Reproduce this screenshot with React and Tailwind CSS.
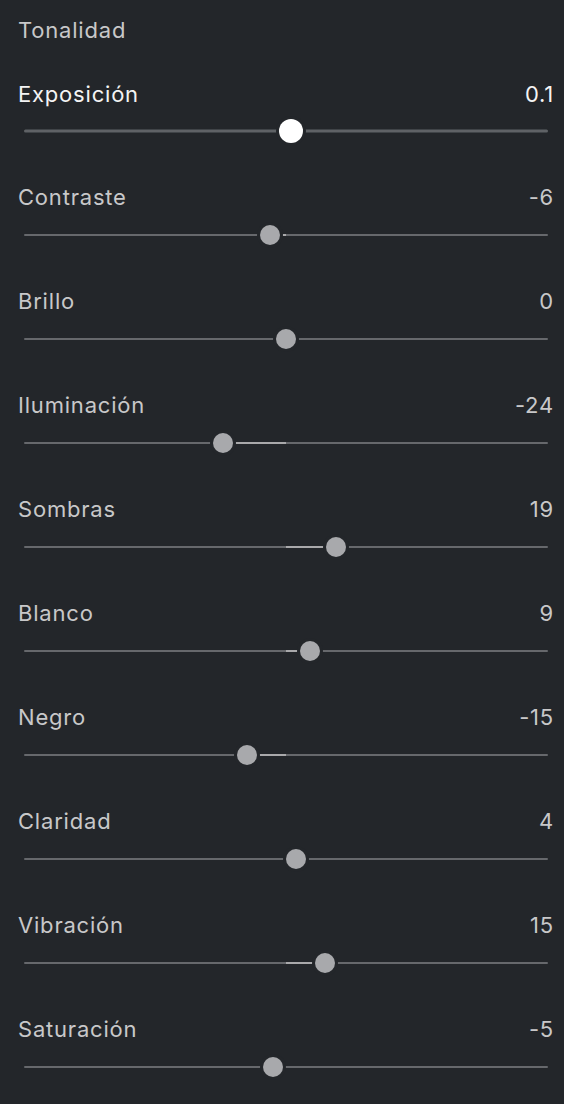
import React from "react";

const rows = [
  { label: "Contraste", value: -6 },
  { label: "Brillo", value: 0 },
  { label: "Iluminación", value: -24 },
  { label: "Sombras", value: 19 },
  { label: "Blanco", value: 9 },
  { label: "Negro", value: -15 },
  { label: "Claridad", value: 4 },
  { label: "Vibración", value: 15 },
  { label: "Saturación", value: -5 },
];

const HALF = 262;

function Slider({ value, max, primary }) {
  const offset = (value / max) * HALF;
  const thumbLeft = HALF + offset;
  const fillLeft = Math.min(HALF, thumbLeft);
  const fillWidth = Math.abs(offset);
  const size = primary ? 24 : 20;
  return (
    <div className={primary ? "relative h-[45px] ml-[6px] mr-[16px]" : "relative h-[48px] ml-[6px] mr-[16px]"}>
      <div
        className={
          primary
            ? "absolute left-0 right-0 top-1/2 -translate-y-1/2 h-[3px] rounded-full bg-[#5f6266]"
            : "absolute left-0 right-0 top-1/2 -translate-y-1/2 h-[2px] rounded-full bg-[#66686c]"
        }
      />
      {!primary && (
        <div
          className="absolute top-1/2 -translate-y-1/2 h-[2px] bg-[#a9a9ab]"
          style={{ left: fillLeft, width: fillWidth }}
        />
      )}
      <div
        className={
          primary
            ? "absolute top-1/2 -translate-x-1/2 -translate-y-1/2 rounded-full bg-white ring-[3px] ring-[#23262a]"
            : "absolute top-1/2 -translate-x-1/2 -translate-y-1/2 rounded-full bg-[#a8a9ac] ring-[3px] ring-[#23262a]"
        }
        style={{ left: thumbLeft, width: size, height: size }}
      />
    </div>
  );
}

export default function App() {
  return (
    <div
      className="w-[564px] h-[1104px] overflow-hidden bg-[#23262a] text-[#c8c8c9]"
      style={{ fontFamily: "Inter, 'Noto Sans', sans-serif" }}
    >
      <div className="pt-[16px] pl-[18px]">
        <div className="h-[28px] leading-[28px] text-[22px] tracking-[0.8px]">Tonalidad</div>
      </div>
      <div className="mt-[36px] pl-[18px] pb-[30px]">
        <div className="flex justify-between pr-[10px] h-[28px] leading-[28px] text-[22px] tracking-[0.8px] text-[#f4f4f4]">
          <span>Exposición</span>
          <span>0.1</span>
        </div>
        <Slider value={0.1} max={5} primary />
      </div>
      {rows.map((r) => (
        <div key={r.label} className="pl-[18px] pb-[28px]">
          <div className="flex justify-between pr-[10px] h-[28px] leading-[28px] text-[22px] tracking-[0.8px]">
            <span>{r.label}</span>
            <span>{r.value}</span>
          </div>
          <Slider value={r.value} max={100} />
        </div>
      ))}
    </div>
  );
}
